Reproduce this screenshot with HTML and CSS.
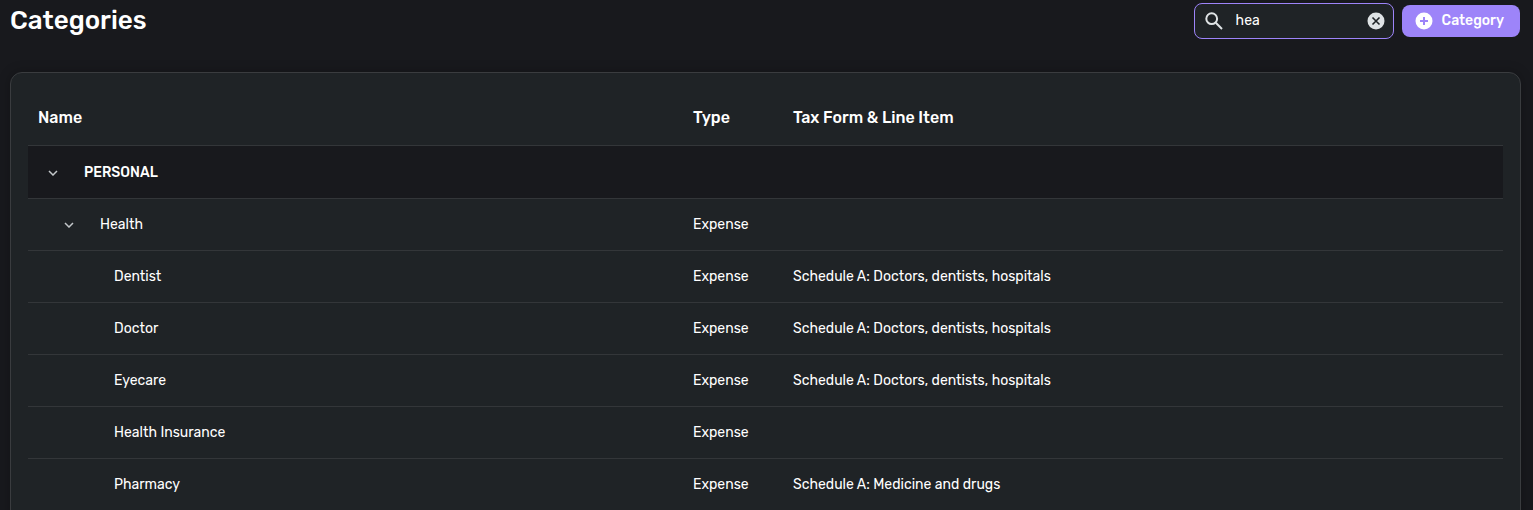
FILE: index.html
```html
<!DOCTYPE html>
<html lang="en">
<head>
  <meta charset="UTF-8">
  <meta name="viewport" content="width=device-width, initial-scale=1">
  <title>Categories</title>
  <link rel="stylesheet" href="styles.css">
</head>
<body>
  <main class="page">
    <header class="header">
      <h1 class="title">Categories</h1>
      <div class="actions">
        <div class="search">
          <svg class="search-icon" viewBox="0 0 18 18" aria-hidden="true">
            <circle cx="6.7" cy="6.7" r="5.4" />
            <path d="M10.8 10.8L17 17" />
          </svg>
          <input class="search-input" type="text" value="hea" aria-label="Search categories">
          <button class="clear-button" type="button" aria-label="Clear search">
            <svg viewBox="0 0 18 18" aria-hidden="true">
              <circle cx="9" cy="9" r="8.5" />
              <path d="M5.5 5.5L12.5 12.5M12.5 5.5L5.5 12.5" />
            </svg>
          </button>
        </div>
        <button class="add-button" type="button">
          <svg viewBox="0 0 18 18" aria-hidden="true">
            <circle cx="9" cy="9" r="8.5" />
            <path d="M9 5V13M5 9H13" />
          </svg>
          Category
        </button>
      </div>
    </header>

    <section class="card">
      <table class="table">
        <thead>
          <tr>
            <th class="col-name" scope="col">Name</th>
            <th class="col-type" scope="col">Type</th>
            <th class="col-tax" scope="col">Tax Form &amp; Line Item</th>
          </tr>
        </thead>
        <tbody>
          <tr class="group">
            <td colspan="3">
              <div class="name">
                <button class="toggle" type="button" aria-label="Collapse Personal" aria-expanded="true">
                  <svg viewBox="0 0 10 6" aria-hidden="true"><path d="M1 1L5 5L9 1" /></svg>
                </button>
                PERSONAL
              </div>
            </td>
          </tr>
          <tr>
            <td>
              <div class="name level-2">
                <button class="toggle" type="button" aria-label="Collapse Health" aria-expanded="true">
                  <svg viewBox="0 0 10 6" aria-hidden="true"><path d="M1 1L5 5L9 1" /></svg>
                </button>
                Health
              </div>
            </td>
            <td>Expense</td>
            <td></td>
          </tr>
          <tr>
            <td class="level-3">Dentist</td>
            <td>Expense</td>
            <td>Schedule A: Doctors, dentists, hospitals</td>
          </tr>
          <tr>
            <td class="level-3">Doctor</td>
            <td>Expense</td>
            <td>Schedule A: Doctors, dentists, hospitals</td>
          </tr>
          <tr>
            <td class="level-3">Eyecare</td>
            <td>Expense</td>
            <td>Schedule A: Doctors, dentists, hospitals</td>
          </tr>
          <tr>
            <td class="level-3">Health Insurance</td>
            <td>Expense</td>
            <td></td>
          </tr>
          <tr>
            <td class="level-3">Pharmacy</td>
            <td>Expense</td>
            <td>Schedule A: Medicine and drugs</td>
          </tr>
        </tbody>
      </table>
    </section>
  </main>
</body>
</html>
```

FILE: styles.css
```css
* {
  box-sizing: border-box;
}

body {
  margin: 0;
  background-color: #18191d;
  color: #fff;
  font-family: Rubik, Roboto, sans-serif;
  font-size: 14px;
  line-height: 20px;
}

button, input {
  padding: 0;
  border: none;
  background: none;
  color: inherit;
  font: inherit;
}

button {
  cursor: pointer;
}

svg {
  display: block;
  flex: none;
  fill: none;
}

.page {
  height: 100vh;
  padding: 2px 12px 0 10px;
  overflow: hidden;
}

.header {
  display: flex;
  justify-content: space-between;
  align-items: center;
  height: 38px;
  margin-bottom: 32px;
  padding-right: 1px;
}

.title {
  margin: 0;
  font-size: 26px;
  font-weight: 500;
  line-height: 32px;
}

.actions {
  display: flex;
  align-items: center;
  gap: 8px;
}

.search {
  display: flex;
  align-items: center;
  width: 200px;
  height: 36px;
  padding: 0 8px 0 10px;
  border: 1px solid #9d84f9;
  border-radius: 8px;
  background-color: #1f2326;
}

.search-icon {
  width: 18px;
  height: 18px;
  stroke: #dfe3e5;
  stroke-width: 2;
}

.search-input {
  flex: 1;
  min-width: 0;
  padding: 0 13px;
  outline: none;
}

.clear-button svg,
.add-button svg {
  width: 18px;
  height: 18px;
}

.clear-button circle {
  fill: #dfe3e5;
}

.clear-button path {
  stroke: #1f2326;
  stroke-width: 1.6;
}

.add-button {
  display: flex;
  align-items: center;
  gap: 9px;
  height: 32px;
  padding: 0 16px 0 13px;
  border-radius: 8px;
  background-color: #9d84f9;
  font-weight: 500;
}

.add-button circle {
  fill: #fff;
}

.add-button path {
  stroke: #9d84f9;
  stroke-width: 2;
}

.card {
  padding: 17px;
  border: 1px solid #3a3c3f;
  border-radius: 12px;
  background-color: #1f2326;
  box-shadow: 0 0 12px rgba(0, 0, 0, 0.25);
}

.table {
  width: 100%;
  border-spacing: 0;
  table-layout: fixed;
}

th, td {
  height: 52px;
  padding: 0 10px;
  border-bottom: 1px solid #333639;
  text-align: left;
}

th {
  height: 56px;
  font-size: 16px;
  font-weight: 500;
}

.col-name {
  width: 655px;
}

.col-type {
  width: 100px;
}

.group td {
  height: 53px;
  padding-top: 1px;
  background-color: #18191d;
  font-weight: 500;
}

.name {
  display: flex;
  align-items: center;
  gap: 16px;
}

.level-2 {
  padding-left: 16px;
}

.level-3 {
  padding-left: 86px;
}

.toggle {
  display: flex;
  justify-content: center;
  align-items: center;
  width: 30px;
  height: 30px;
}

.toggle svg {
  width: 10px;
  height: 6px;
  stroke: #c3c7ca;
  stroke-width: 1.5;
}
```
